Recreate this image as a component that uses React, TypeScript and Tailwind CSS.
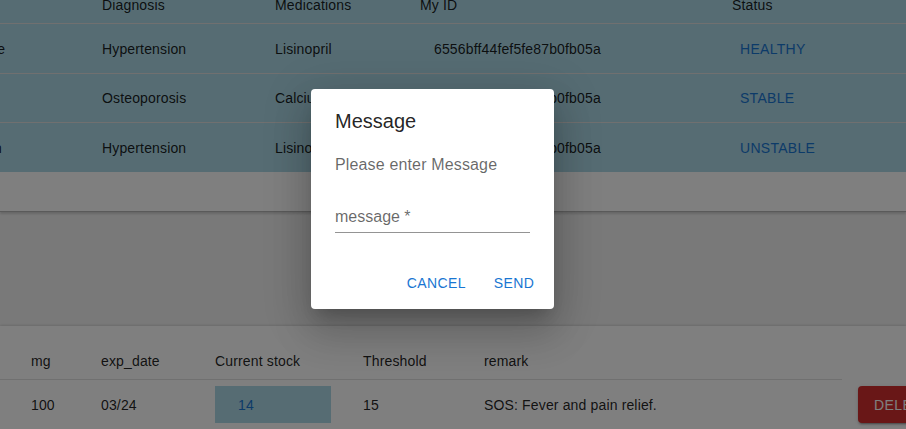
import React from "react";

const patients = [
  { name: "Jane Doe", diagnosis: "Hypertension", meds: "Lisinopril", id: "6556bff44fef5fe87b0fb05a", status: "HEALTHY", h: "h-[50px] border-b" },
  { name: "Bo Li", diagnosis: "Osteoporosis", meds: "Calcium", id: "6556bff44fef5fe87b0fb05a", status: "STABLE", h: "h-[49px] border-b" },
  { name: "Ian Dunn", diagnosis: "Hypertension", meds: "Lisinopril", id: "6556bff44fef5fe87b0fb05a", status: "UNSTABLE", h: "h-[49px]" },
];

function PatientTable() {
  return (
    <div className="bg-white border-b border-[#b4b4b4] shadow-[0_2px_2px_rgba(0,0,0,0.15)]">
      <div className="ml-[-84px] bg-[#add8e6] text-sm tracking-[0.01071em] text-[rgba(0,0,0,0.87)]">
        <div className="mt-[-13px] flex h-[37px] items-center border-b border-[#e0e0e0]">
          <div className="w-[170px] shrink-0 pl-[28px]">Name</div>
          <div className="w-[173px] shrink-0 pl-4">Diagnosis</div>
          <div className="w-[145px] shrink-0 pl-4">Medications</div>
          <div className="w-[312px] shrink-0 pl-4">My ID</div>
          <div className="shrink-0 pl-4">Status</div>
        </div>
        {patients.map((p) => (
          <div key={p.status} className={`flex items-center border-[#e0e0e0] ${p.h}`}>
            <div className="w-[170px] shrink-0 pl-[28px] whitespace-nowrap">{p.name}</div>
            <div className="w-[173px] shrink-0 pl-4">{p.diagnosis}</div>
            <div className="w-[145px] shrink-0 pl-4">{p.meds}</div>
            <div className="w-[312px] shrink-0 pl-[30px]">{p.id}</div>
            <div className="shrink-0 pl-4">
              <button className="px-2 py-[6px] text-sm uppercase tracking-[0.02em] text-[#1976d2]">
                {p.status}
              </button>
            </div>
          </div>
        ))}
      </div>
      <div className="h-[39px]" />
    </div>
  );
}

function StockTable() {
  return (
    <div className="bg-white pt-[17px] shadow-[0_-1px_2px_rgba(0,0,0,0.12)] text-sm tracking-[0.01071em] text-[rgba(0,0,0,0.87)]">
      <div className="flex h-[37px] w-[842px] items-center border-b border-[#e0e0e0]">
        <div className="w-[85px] shrink-0 pl-[31px]">mg</div>
        <div className="w-[114px] shrink-0 pl-4">exp_date</div>
        <div className="w-[148px] shrink-0 pl-4">Current stock</div>
        <div className="w-[121px] shrink-0 pl-4">Threshold</div>
        <div className="w-[374px] shrink-0 pl-4">remark</div>
      </div>
      <div className="flex h-[50px] items-center border-b border-[#e0e0e0] whitespace-nowrap">
        <div className="w-[85px] shrink-0 pl-[31px]">100</div>
        <div className="w-[114px] shrink-0 pl-4">03/24</div>
        <div className="w-[148px] shrink-0 pl-4">
          <div className="flex h-[37px] w-[116px] items-center bg-[#add8e6] pl-[23px] text-[#1976d2]">14</div>
        </div>
        <div className="w-[121px] shrink-0 pl-4">15</div>
        <div className="w-[374px] shrink-0 pl-4">SOS: Fever and pain relief.</div>
        <div className="shrink-0 pl-4">
          <button className="flex h-[37px] items-center rounded bg-[#d32f2f] px-4 text-sm uppercase tracking-[0.02857em] text-white shadow-[0_3px_1px_-2px_rgba(0,0,0,0.2),0_2px_2px_0_rgba(0,0,0,0.14),0_1px_5px_0_rgba(0,0,0,0.12)]">
            Delete
          </button>
        </div>
      </div>
    </div>
  );
}

function MessageDialog() {
  return (
    <div className="absolute left-[311px] top-[89px] flex h-[220px] w-[243px] flex-col rounded bg-white shadow-[0px_11px_15px_-7px_rgba(0,0,0,0.2),0px_24px_38px_3px_rgba(0,0,0,0.14),0px_9px_46px_8px_rgba(0,0,0,0.12)]">
      <h2 className="px-6 pt-4 text-xl leading-8 text-[rgba(0,0,0,0.87)]">Message</h2>
      <div className="px-6">
        <p className="mt-[16px] text-base leading-6 tracking-[0.00938em] text-[rgba(0,0,0,0.6)]">
          Please enter Message
        </p>
        <div className="mt-[28px] border-b border-[rgba(0,0,0,0.42)] pb-[3px]">
          <span className="text-base leading-6 text-[rgba(0,0,0,0.6)]">message *</span>
        </div>
      </div>
      <div className="mt-auto flex justify-end gap-2 p-2">
        <button className="h-[37px] min-w-16 px-2 text-sm uppercase tracking-[0.02857em] text-[#1976d2]">Cancel</button>
        <button className="h-[37px] min-w-16 px-2 text-sm uppercase tracking-[0.02857em] text-[#1976d2]">Send</button>
      </div>
    </div>
  );
}

export default function App() {
  return (
    <div className="relative h-[429px] w-[906px] overflow-hidden bg-[#f3f3f3] font-['Liberation_Sans',Arial,sans-serif]">
      <PatientTable />
      <div className="h-[114px]" />
      <StockTable />
      <div className="absolute inset-0 bg-black/50" />
      <MessageDialog />
    </div>
  );
}
